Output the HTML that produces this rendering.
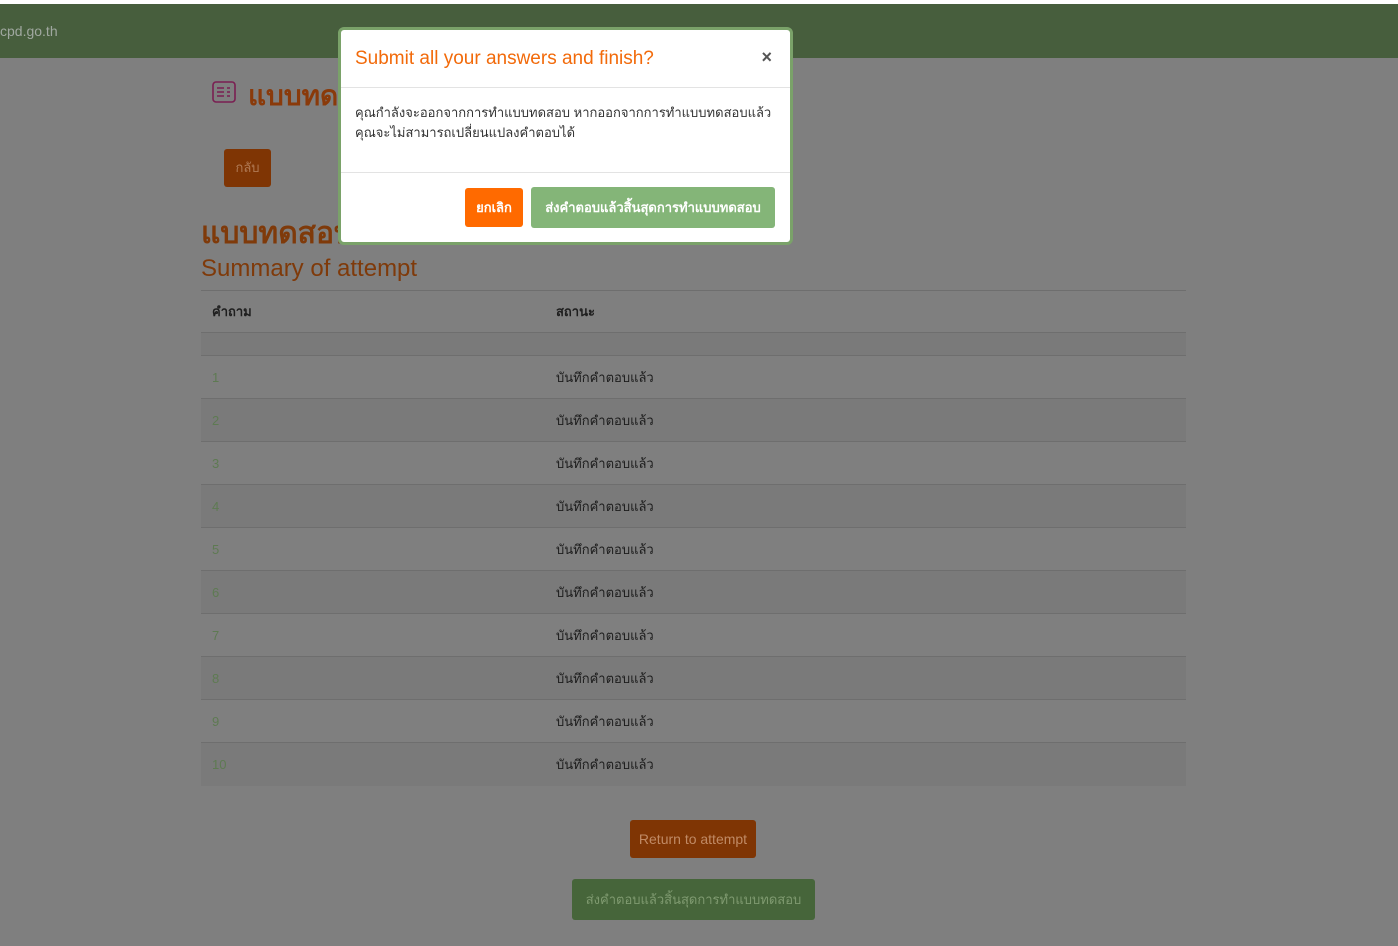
<!DOCTYPE html>
<html><head><meta charset="utf-8"><style>
*{box-sizing:border-box}
body{margin:0;width:1398px;height:946px;background:#7f7f7f;font-family:"Liberation Sans","Noto Sans CJK SC",sans-serif;position:relative;overflow:hidden}
.top{position:absolute;left:0;top:0;width:1398px;height:4px;background:#fff}
.nav{position:absolute;left:0;top:4px;width:1398px;height:54px;background:#475e3d}
.nav span{position:absolute;left:0;top:19px;color:#a0a8a0;font-size:14px}
.abs{position:absolute}
table{position:absolute;left:201px;top:290px;width:985px;border-collapse:collapse;font-size:13px}
td,th{text-align:left;padding:0 11px;border-top:1px solid #6e6e6e}
th{height:43px;color:#1e1e1e;font-weight:bold}
td{height:43px}
td:first-child{width:344px;color:#5e7a52}
td:last-child{color:#1c1c1c}
tr.s td{background:#7a7a7a}
</style></head><body>
<div class="top"></div>
<div class="nav"><span>cpd.go.th</span></div>
<svg class="abs" style="left:212px;top:81px" width="24" height="22" viewBox="0 0 24 22" fill="none" stroke="#7a1f52" stroke-width="1.6"><rect x="1" y="1" width="22" height="20" rx="3"/><path d="M5 7h7M5 11h7M5 15h7M15 7h3M15 11h3M15 15h3"/></svg>
<div class="abs" style="left:248px;top:74px;font-size:28px;font-weight:bold;color:#8a3a0a">แบบทด</div>
<div class="abs" style="left:224px;top:149px;width:47px;height:38px;background:#7f3504;border-radius:3px;color:#b07a55;font-size:13px;text-align:center;line-height:38px">กลับ</div>
<div class="abs" style="left:201px;top:210px;font-size:30px;font-weight:bold;color:#7f3a0a">แบบทดสอบ</div>
<div class="abs" style="left:201px;top:255px;font-size:24px;color:#7f3a0a">Summary of attempt</div>
<table>
<tr><th style="height:42px">คำถาม</th><th style="height:42px">สถานะ</th></tr>
<tr class="s"><td style="height:23px"></td><td style="height:23px"></td></tr>
<tr><td>1</td><td>บันทึกคำตอบแล้ว</td></tr>
<tr class="s"><td>2</td><td>บันทึกคำตอบแล้ว</td></tr>
<tr><td>3</td><td>บันทึกคำตอบแล้ว</td></tr>
<tr class="s"><td>4</td><td>บันทึกคำตอบแล้ว</td></tr>
<tr><td>5</td><td>บันทึกคำตอบแล้ว</td></tr>
<tr class="s"><td>6</td><td>บันทึกคำตอบแล้ว</td></tr>
<tr><td>7</td><td>บันทึกคำตอบแล้ว</td></tr>
<tr class="s"><td>8</td><td>บันทึกคำตอบแล้ว</td></tr>
<tr><td>9</td><td>บันทึกคำตอบแล้ว</td></tr>
<tr class="s"><td>10</td><td>บันทึกคำตอบแล้ว</td></tr>
</table>
<div class="abs" style="left:630px;top:820px;width:126px;height:38px;background:#7f3504;border-radius:3px;color:#c08a65;font-size:14px;text-align:center;line-height:38px">Return to attempt</div>
<div class="abs" style="left:572px;top:879px;width:243px;height:41px;background:#46653a;border-radius:3px;color:#7f9a70;font-size:13px;text-align:center;line-height:41px">ส่งคำตอบแล้วสิ้นสุดการทำแบบทดสอบ</div>
<div class="abs" style="left:338px;top:27px;width:455px;height:218px;background:#fff;border:3px solid #7aa269;border-radius:6px">
 <div style="height:58px;border-bottom:1px solid #e3e3e3;position:relative">
  <div class="abs" style="left:14px;top:18px;font-size:19px;color:#f26a0a">Submit all your answers and finish?</div>
  <div class="abs" style="right:18px;top:17px;font-size:18px;font-weight:bold;color:#555">×</div>
 </div>
 <div style="height:85px;border-bottom:1px solid #e3e3e3;padding:15px 14px;font-size:13px;line-height:20px;color:#333">คุณกำลังจะออกจากการทำแบบทดสอบ หากออกจากการทำแบบทดสอบแล้ว<br>คุณจะไม่สามารถเปลี่ยนแปลงคำตอบได้</div>
 <div class="abs" style="left:124px;top:158px;width:58px;height:39px;background:#ff6a00;border-radius:3px;color:#fff;font-size:13px;font-weight:bold;text-align:center;line-height:39px">ยกเลิก</div>
 <div class="abs" style="left:190px;top:157px;width:244px;height:41px;background:#84b578;border-radius:3px;color:#fff;font-size:13px;font-weight:bold;text-align:center;line-height:41px">ส่งคำตอบแล้วสิ้นสุดการทำแบบทดสอบ</div>
</div>
</body></html>
